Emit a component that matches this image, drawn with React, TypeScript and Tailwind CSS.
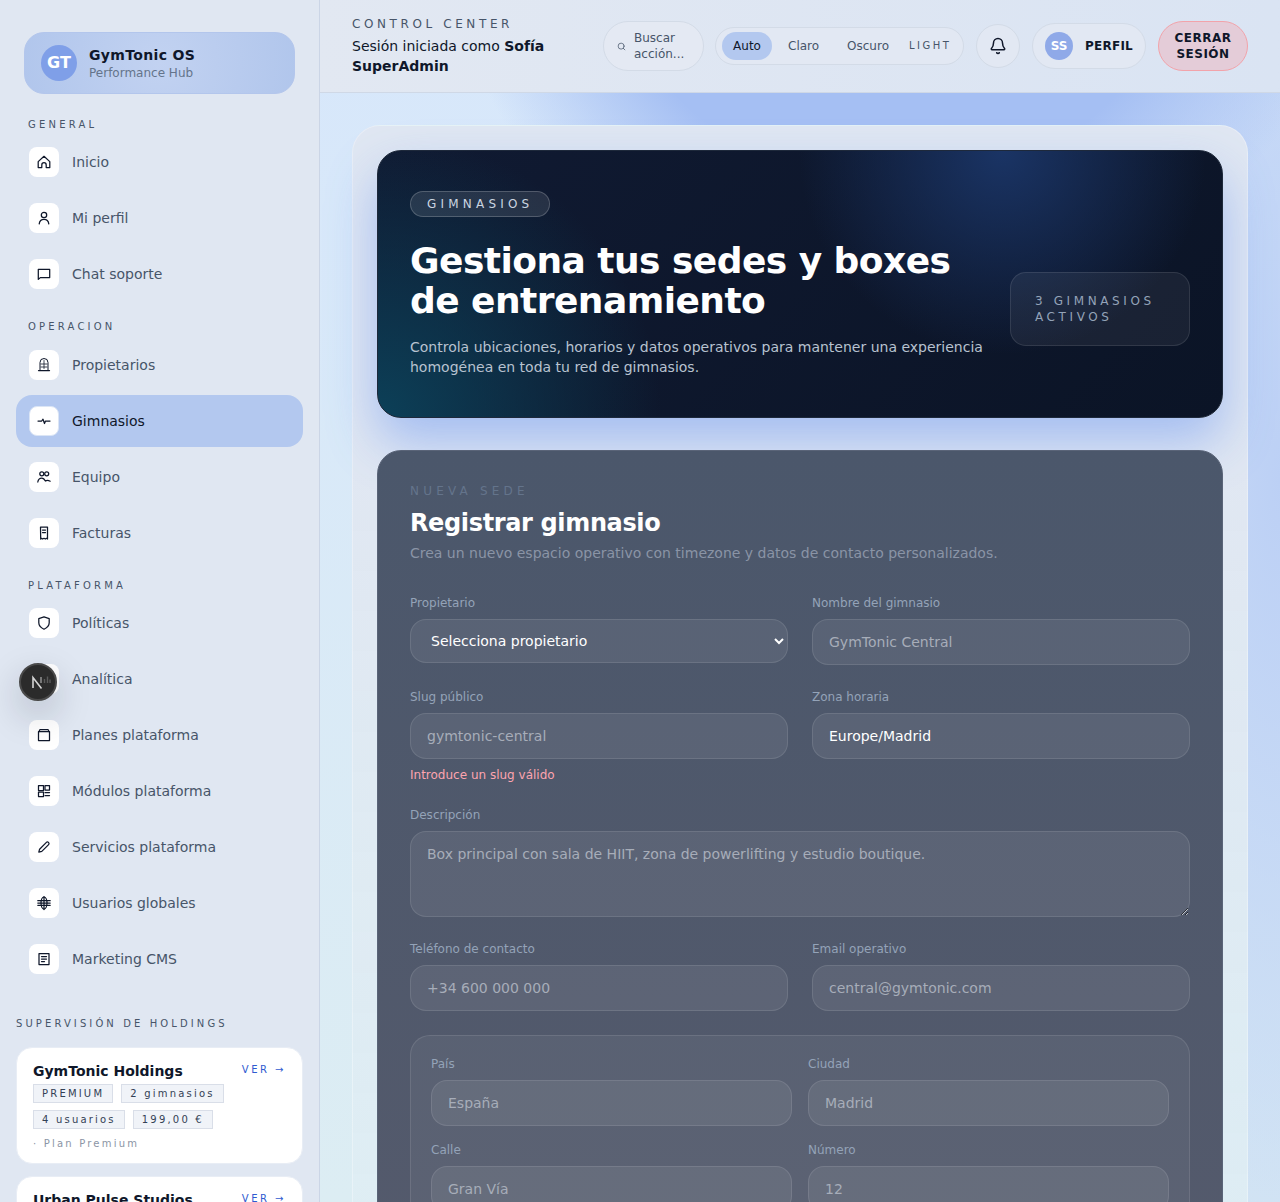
import { Bell, Search } from "lucide-react";
import type { ReactNode } from "react";

function Icon({ children }: { children: ReactNode }) {
  return (
    <svg viewBox="0 0 16 16" className="h-4 w-4 text-[#0f172a]" fill="none" stroke="currentColor" strokeWidth="1.25" strokeLinejoin="round" strokeLinecap="round">
      {children}
    </svg>
  );
}

type NavItem = { label: string; icon: ReactNode; active?: boolean };

const general: NavItem[] = [
  { label: "Inicio", icon: <Icon><path d="M2.2 7.6 8 2.3l5.8 5.3v5.9h-3.6v-2.6a2.2 2.2 0 0 0-4.4 0v2.6H2.2z" /></Icon> },
  { label: "Mi perfil", icon: <Icon><circle cx="8" cy="5" r="2.7" /><path d="M3.2 13.8c.4-3 2.6-4.4 4.8-4.4s4.4 1.4 4.8 4.4" /></Icon> },
  { label: "Chat soporte", icon: <Icon><path d="M2.3 3.3h11.4v8.3H4.3l-2 1.8z" /></Icon> },
];

const operacion: NavItem[] = [
  { label: "Propietarios", icon: <Icon><path d="M4 13.5V5.5a4 4 0 0 1 8 0v8" strokeWidth="1" /><path d="M2.5 13.5h11" /><path d="M5 7h6M5 10h6M8 3.5v8" strokeWidth="0.8" /></Icon> },
  { label: "Gimnasios", active: true, icon: <Icon><path d="M2 8h3.7L7 6.2l1.5 4.3 1-2.5H14" /></Icon> },
  { label: "Equipo", icon: <Icon><circle cx="5.8" cy="4.8" r="2" /><circle cx="10.7" cy="4.8" r="2" /><path d="M1.8 13c.4-2.7 2.3-4 4-4s2.7 1.2 3.6 3c1.2-.9 3.2-.7 4.8.2" /></Icon> },
  { label: "Facturas", icon: <Icon><path d="M4.5 2h7v12l-1-.7-1.2.7-1.3-.7-1.3.7-1.2-.7-.8.7z" /><path d="M6.5 5h3M6.5 7.5h3" /></Icon> },
];

const plataforma: NavItem[] = [
  { label: "Políticas", icon: <Icon><path d="M8 1.8 13.2 3.6v4.2c0 3-2.3 5.1-5.2 6.4-2.9-1.3-5.2-3.4-5.2-6.4V3.6z" /></Icon> },
  { label: "Analítica", icon: <Icon><path d="M7 12V8M10.5 12V4M14 12V6" /></Icon> },
  { label: "Planes plataforma", icon: <Icon><rect x="2.5" y="4.5" width="11" height="9" /><path d="M3 4.5 4 2.5h8l1 2" /></Icon> },
  { label: "Módulos plataforma", icon: <Icon><rect x="2.5" y="2.5" width="5" height="5" /><rect x="9" y="2.5" width="4.5" height="4.500" /><rect x="2.5" y="9" width="5" height="4.5" /><path d="M9 9.5h4.5M9 12.5h4.5" /></Icon> },
  { label: "Servicios plataforma", icon: <Icon><path d="M2.8 13.2l.8-3L10.4 3.4a1.4 1.4 0 0 1 2 0l.2.2a1.4 1.4 0 0 1 0 2L5.8 12.4z" /></Icon> },
  { label: "Usuarios globales", icon: <Icon><ellipse cx="8" cy="8" rx="3" ry="6" /><path d="M8 1.5v13M1.8 5.7h12.4M1.8 8h12.4M1.8 10.3h12.4" /></Icon> },
  { label: "Marketing CMS", icon: <Icon><rect x="3" y="2.5" width="10" height="11" /><path d="M5.5 5.5h5M5.5 8h5M5.5 10.5h3" /></Icon> },
];

function NavSection({ title, items, labelClass = "" }: { title: string; items: NavItem[]; labelClass?: string }) {
  return (
    <div className="flex flex-col gap-1">
      <p className={"pl-3 text-[10px] leading-[15px] uppercase tracking-[0.32em] text-[#475569] " + labelClass}>{title}</p>
      {items.map((item) => (
        <div
          key={item.label}
          className={
            "flex h-[52px] items-center gap-[13px] rounded-2xl px-[13px] text-sm " +
            (item.active ? "bg-[#b3c8ef] text-[#0f172a]" : "text-[#475569]")
          }
        >
          <span
            className={
              "flex h-[30px] w-[30px] items-center justify-center rounded-lg bg-white " +
              (item.active ? "border border-[#dbe5f5]" : "")
            }
          >
            {item.icon}
          </span>
          {item.label}
        </div>
      ))}
    </div>
  );
}

function Tag({ children }: { children: ReactNode }) {
  return (
    <span className="border border-[#d9dee8] bg-[#f0f3f8] px-[8px] py-px text-[10px] leading-[15px] tracking-[0.22em] text-[#334155]">
      {children}
    </span>
  );
}

function HoldingCard({ name, tags, plan }: { name: string; tags: string[]; plan: string }) {
  return (
    <div className="rounded-2xl border border-[#e8edf5] bg-white px-4 pt-[13px] pb-3">
      <div className="flex items-start justify-between">
        <p className="text-sm font-semibold text-[#0f172a]">{name}</p>
        <span className="mt-px text-[10px] leading-4 tracking-[0.25em] text-[#2f5bd0]">VER →</span>
      </div>
      <div className="mt-[3px] flex flex-wrap gap-x-2 gap-y-[7px]">
        {tags.map((tag) => (
          <Tag key={tag}>{tag}</Tag>
        ))}
      </div>
      <p className="mt-[7px] text-[10px] leading-[15px] tracking-[0.22em] text-[#8b95a5]">· {plan}</p>
    </div>
  );
}

function Sidebar() {
  return (
    <aside className="relative h-full w-[320px] shrink-0 overflow-hidden border-r border-[#cbd5e6] bg-[#e0e7f2] px-4 pt-8">
      <div className="mx-2 flex h-[62px] items-center gap-3 rounded-[20px] border border-[#b3c6ec] bg-[radial-gradient(circle_at_center,#c2d2f1,#b1c6ec)] px-4">
        <span className="flex h-9 w-9 items-center justify-center rounded-full bg-[#7f9fe8] text-base font-bold text-white">GT</span>
        <div>
          <p className="text-sm leading-5 font-semibold tracking-[0.025em] text-[#0f172a]">GymTonic OS</p>
          <p className="text-xs leading-4 text-[#64748b]">Performance Hub</p>
        </div>
      </div>
      <div className="mt-[23px] flex flex-col gap-[19px]">
        <NavSection title="General" items={general} />
        <NavSection title="Operacion" items={operacion} labelClass="mb-px" />
        <NavSection title="Plataforma" items={plataforma} />
      </div>
      <p className="mt-[31px] text-[10px] leading-[15px] tracking-[0.31em] text-[#475569]">SUPERVISIÓN DE HOLDINGS</p>
      <div className="mt-4 flex flex-col gap-3">
        <HoldingCard name="GymTonic Holdings" tags={["PREMIUM", "2 gimnasios", "4 usuarios", "199,00 €"]} plan="Plan Premium" />
        <HoldingCard name="Urban Pulse Studios" tags={["PREMIUM", "1 gimnasio"]} plan="Plan Premium" />
      </div>
    </aside>
  );
}

function Header() {
  return (
    <header className="flex h-[93px] shrink-0 items-center justify-between border-b border-[#cfd8e6] bg-gradient-to-r from-[#e2e8f2] to-[#dae4f3] pr-8 pl-8">
      <div className="w-[235px] pb-px">
        <p className="text-xs leading-4 tracking-[0.3em] text-[#475569]">CONTROL CENTER</p>
        <p className="mt-1 text-sm leading-5 text-[#0f172a]">
          Sesión iniciada como <span className="font-semibold">Sofía SuperAdmin</span>
        </p>
      </div>
      <div className="flex items-center gap-3">
        <div className="-mr-px flex h-[50px] w-[101px] items-center gap-2 rounded-full border border-[#d3dbe7] bg-[#e4e9f3] pl-[13px] text-xs leading-4 text-[#475569]">
          <Search className="h-[9px] w-[9px] shrink-0" />
          <span>Buscar acción...</span>
        </div>
        <div className="flex h-[38px] w-[249px] items-center rounded-full border border-[#d3dbe7] bg-[#e2e8f3] pl-1.5 text-xs text-[#475569]">
          <span className="flex h-7 w-[50px] items-center justify-center rounded-full bg-[#b3c8ef] text-[#0f172a]">Auto</span>
          <span className="ml-4">Claro</span>
          <span className="ml-7">Oscuro</span>
          <span className="ml-5 text-[10px] tracking-[0.25em]">LIGHT</span>
        </div>
        <div className="flex h-11 w-11 items-center justify-center rounded-full border border-[#d3dbe7] bg-[#e2e8f3]">
          <Bell className="h-[18px] w-[18px] text-[#0f172a]" />
        </div>
        <div className="flex h-[46px] w-[114px] items-center gap-3 rounded-full border border-[#d3dbe7] bg-[#e2e8f3] pl-3">
          <span className="flex h-7 w-7 items-center justify-center rounded-full bg-[#8fa9e8] text-xs font-bold text-white">SS</span>
          <span className="text-xs font-semibold tracking-[0.02em] text-[#0f172a]">PERFIL</span>
        </div>
        <div className="flex h-[50px] w-[90px] items-center justify-center rounded-full border border-[#f2a3aa] bg-[#e4ccd8] text-center text-xs leading-4 font-semibold tracking-[0.04em] text-[#0f172a]">
          CERRAR SESIÓN
        </div>
      </div>
    </header>
  );
}

const inputClass =
  "h-[46px] w-full rounded-2xl border border-white/10 bg-white/[0.07] px-4 text-sm text-white outline-none placeholder:text-[#a7adb9]";

function Field({ label, children }: { label: string; children: ReactNode }) {
  return (
    <label className="flex flex-col gap-2 text-xs leading-4 text-[#94a3b8]">
      {label}
      {children}
    </label>
  );
}

function Hero() {
  return (
    <section className="flex h-[268px] items-center gap-6 rounded-3xl border border-[#1e293b] bg-[radial-gradient(circle_at_74%_0%,#1a3465,transparent_30%),radial-gradient(circle_at_0%_100%,#0c4058,transparent_32%),linear-gradient(135deg,#101a32,#0b1426)] px-8 shadow-[0_24px_50px_rgba(80,130,240,0.42)]">
      <div className="min-w-0 flex-1">
        <span className="inline-block rounded-full border border-white/20 bg-white/10 px-4 py-1 text-xs leading-4 tracking-[0.35em] text-[#cbd5e1]">GIMNASIOS</span>
        <h1 className="mt-6 text-4xl leading-10 font-bold tracking-[-0.015em] text-white">Gestiona tus sedes y boxes de entrenamiento</h1>
        <p className="mt-4 text-sm leading-5 text-[#b8c2d0]">
          Controla ubicaciones, horarios y datos operativos para mantener una experiencia homogénea en toda tu red de gimnasios.
        </p>
      </div>
      <div className="mt-[50px] w-[180px] shrink-0 rounded-2xl border border-white/10 bg-white/[0.06] px-6 py-5 text-xs leading-4 tracking-[0.3em] text-[#94a3b8]">
        3 GIMNASIOS ACTIVOS
      </div>
    </section>
  );
}

function GymForm() {
  return (
    <section className="mt-8 rounded-t-3xl border border-[#5a6478] bg-[linear-gradient(180deg,#4b576b,#545a6c)] px-8 pt-8 pb-10">
      <p className="text-xs leading-4 tracking-[0.35em] text-[#64748b]">NUEVA SEDE</p>
      <h2 className="mt-2 text-2xl leading-8 font-semibold tracking-[-0.015em] text-white">Registrar gimnasio</h2>
      <p className="mt-1 text-sm leading-5 text-[#8a94a6]">Crea un nuevo espacio operativo con timezone y datos de contacto personalizados.</p>
      <div className="mt-8 grid grid-cols-2 gap-x-6 gap-y-6">
        <Field label="Propietario">
          <select className="h-11 rounded-2xl border border-white/10 bg-white/[0.07] px-4 text-sm text-white outline-none" defaultValue="">
            <option value="">Selecciona propietario</option>
          </select>
        </Field>
        <Field label="Nombre del gimnasio">
          <input className={inputClass} placeholder="GymTonic Central" />
        </Field>
        <div>
          <Field label="Slug público">
            <input className={inputClass} placeholder="gymtonic-central" />
          </Field>
          <p className="mt-2 text-xs leading-4 text-[#fda4af]">Introduce un slug válido</p>
        </div>
        <Field label="Zona horaria">
          <input className={inputClass} defaultValue="Europe/Madrid" />
        </Field>
      </div>
      <div className="mt-6">
        <Field label="Descripción">
          <textarea
            className="h-[86px] w-full rounded-2xl border border-white/10 bg-white/[0.07] px-4 py-3 text-sm text-white outline-none placeholder:text-[#a7adb9]"
            placeholder="Box principal con sala de HIIT, zona de powerlifting y estudio boutique."
          />
        </Field>
      </div>
      <div className="mt-6 grid grid-cols-2 gap-6">
        <Field label="Teléfono de contacto">
          <input className={inputClass} placeholder="+34 600 000 000" />
        </Field>
        <Field label="Email operativo">
          <input className={inputClass} placeholder="central@gymtonic.com" />
        </Field>
      </div>
      <div className="mt-6 rounded-[20px] border border-white/10 bg-white/[0.05] p-5">
        <div className="grid grid-cols-2 gap-x-4 gap-y-4">
          <Field label="País">
            <input className={inputClass} placeholder="España" />
          </Field>
          <Field label="Ciudad">
            <input className={inputClass} placeholder="Madrid" />
          </Field>
          <Field label="Calle">
            <input className={inputClass} placeholder="Gran Vía" />
          </Field>
          <Field label="Número">
            <input className={inputClass} placeholder="12" />
          </Field>
        </div>
      </div>
    </section>
  );
}

function DevBadge() {
  return (
    <div className="absolute top-[663px] left-[19px] flex h-[38px] w-[38px] items-center justify-center rounded-full border-2 border-[#4a4a4a] bg-[#2b2b2b] shadow-[0_14px_36px_rgba(15,23,42,0.22)]">
      <svg viewBox="0 0 34 34" className="h-[34px] w-[34px]" fill="none">
        <path d="M12 23V12.5l8.5 11" stroke="#d4d4d4" strokeWidth="1.6" />
        <path d="M20 12v6" stroke="#9a9a9a" strokeWidth="1.4" />
        <path d="M23.5 14v4M26.5 11.5v6.5M29 14.5v3.5" stroke="#5a5a5a" strokeWidth="1.4" />
      </svg>
    </div>
  );
}

export default function App() {
  return (
    <div className="relative flex h-screen w-full overflow-hidden bg-[#e0e7f2] font-['DejaVu_Sans',sans-serif]">
      <Sidebar />
      <main className="flex min-w-0 flex-1 flex-col bg-[radial-gradient(ellipse_430px_300px_at_60%_0%,#a5bff3_60%,transparent),radial-gradient(ellipse_300px_1100px_at_100%_40%,#bcd0f5,transparent),linear-gradient(180deg,#d7e7fb,#dcedf3)]">
        <Header />
        <div className="min-h-0 flex-1 overflow-hidden px-8 pt-8">
          <div className="rounded-t-[28px] border border-white/30 bg-[linear-gradient(180deg,#e0e7f2,#e0e7f2_30%,rgba(222,238,243,0.92))] px-6 pt-6">
            <Hero />
            <GymForm />
          </div>
        </div>
      </main>
      <DevBadge />
    </div>
  );
}
